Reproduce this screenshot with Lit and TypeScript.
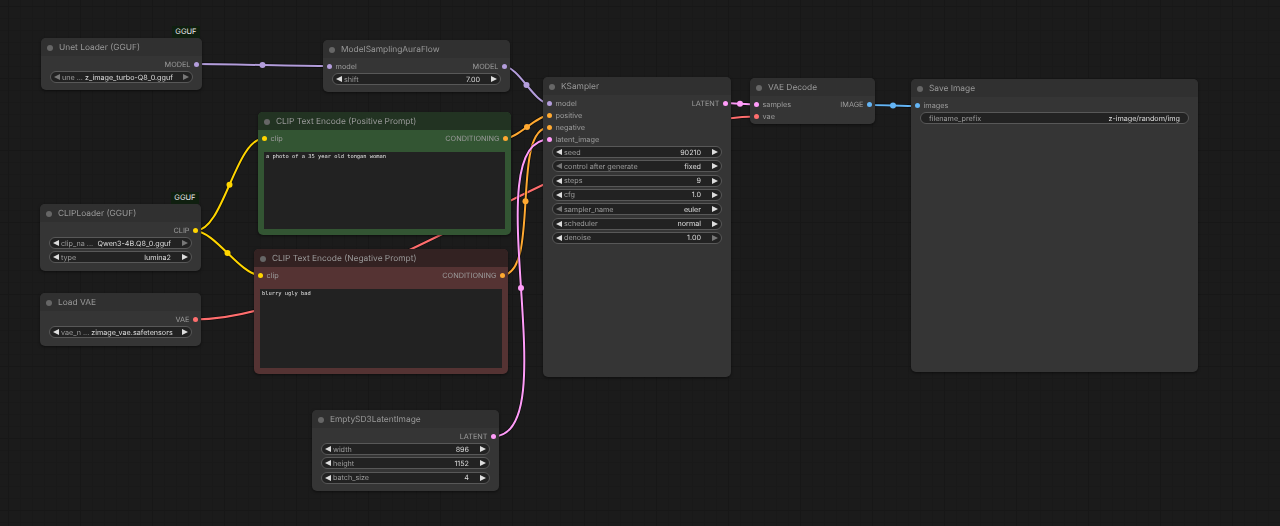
import {LitElement, html, css, svg} from 'lit';
import {customElement, property} from 'lit/decorators.js';

type Slot = {name: string; color: string};
type Widget = {label: string; value: string; dimL?: boolean; dimR?: boolean; noArrows?: boolean};
type NodeData = {
    title: string;
    x: number;
    y: number;
    w: number;
    h: number;
    tone?: 'green' | 'red';
    badge?: string;
    inputs?: Slot[];
    outputs?: Slot[];
    widgets?: Widget[];
    text?: string;
};

const MODEL = '#b39ddb';
const CLIP = '#ffd500';
const VAE = '#ff6e6e';
const COND = '#ffa931';
const LATENT = '#ff9cf9';
const IMAGE = '#64b5f6';

const NODES: NodeData[] = [
    {
        title: 'Unet Loader (GGUF)', x: 41, y: 38, w: 161, h: 52, badge: 'GGUF',
        outputs: [{name: 'MODEL', color: MODEL}],
        widgets: [{label: 'une ...', value: 'z_image_turbo-Q8_0.gguf', dimL: true, dimR: true}],
    },
    {
        title: 'ModelSamplingAuraFlow', x: 323, y: 40, w: 187, h: 52,
        inputs: [{name: 'model', color: MODEL}],
        outputs: [{name: 'MODEL', color: MODEL}],
        widgets: [{label: 'shift', value: '7.00'}],
    },
    {
        title: 'CLIP Text Encode (Positive Prompt)', x: 258, y: 112, w: 253, h: 123, tone: 'green',
        inputs: [{name: 'clip', color: CLIP}],
        outputs: [{name: 'CONDITIONING', color: COND}],
        text: 'a photo of a 35 year old tongan woman',
    },
    {
        title: 'CLIPLoader (GGUF)', x: 40, y: 204, w: 161, h: 67, badge: 'GGUF',
        outputs: [{name: 'CLIP', color: CLIP}],
        widgets: [
            {label: 'clip_na ...', value: 'Qwen3-4B.Q8_0.gguf', dimR: true},
            {label: 'type', value: 'lumina2'},
        ],
    },
    {
        title: 'Load VAE', x: 40, y: 293, w: 161, h: 53,
        outputs: [{name: 'VAE', color: VAE}],
        widgets: [{label: 'vae_n ...', value: 'zimage_vae.safetensors'}],
    },
    {
        title: 'CLIP Text Encode (Negative Prompt)', x: 254, y: 249, w: 254, h: 125, tone: 'red',
        inputs: [{name: 'clip', color: CLIP}],
        outputs: [{name: 'CONDITIONING', color: COND}],
        text: 'blurry ugly bad',
    },
    {
        title: 'EmptySD3LatentImage', x: 312, y: 410, w: 187, h: 81,
        outputs: [{name: 'LATENT', color: LATENT}],
        widgets: [
            {label: 'width', value: '896'},
            {label: 'height', value: '1152'},
            {label: 'batch_size', value: '4'},
        ],
    },
    {
        title: 'KSampler', x: 543, y: 77, w: 188, h: 300,
        inputs: [
            {name: 'model', color: MODEL},
            {name: 'positive', color: COND},
            {name: 'negative', color: COND},
            {name: 'latent_image', color: LATENT},
        ],
        outputs: [{name: 'LATENT', color: LATENT}],
        widgets: [
            {label: 'seed', value: '90210'},
            {label: 'control after generate', value: 'fixed', dimL: true},
            {label: 'steps', value: '9'},
            {label: 'cfg', value: '1.0'},
            {label: 'sampler_name', value: 'euler', dimL: true},
            {label: 'scheduler', value: 'normal'},
            {label: 'denoise', value: '1.00', dimR: true},
        ],
    },
    {
        title: 'VAE Decode', x: 750, y: 78, w: 125, h: 46,
        inputs: [{name: 'samples', color: LATENT}, {name: 'vae', color: VAE}],
        outputs: [{name: 'IMAGE', color: IMAGE}],
    },
    {
        title: 'Save Image', x: 911, y: 79, w: 287, h: 293,
        inputs: [{name: 'images', color: IMAGE}],
        widgets: [{label: 'filename_prefix', value: 'z-image/random/img', noArrows: true}],
    },
];

// from slot, to slot, colour
const WIRES: [number, number, number, number, string][] = [
    [195, 319.5, 755, 116.5, VAE],
    [196, 64, 329, 66, MODEL],
    [504, 66.5, 549, 103.5, MODEL],
    [195, 231, 264, 138.5, CLIP],
    [195, 231, 260, 275, CLIP],
    [505, 138.5, 549, 115.5, COND],
    [502, 275, 549, 127.5, COND],
    [493, 436.5, 549, 139.5, LATENT],
    [725, 103, 755, 104.5, LATENT],
    [869, 105, 917, 106, IMAGE],
];

@customElement('graph-node')
export class GraphNode extends LitElement {
    @property({attribute: false}) data!: NodeData;

    static styles = css`
        :host {
            display: block;
            position: absolute;
        }

        .node {
            position: relative;
            display: flex;
            flex-direction: column;
            height: 100%;
            border-radius: 5px;
            background: #353535;
            box-shadow: 0 1px 3px rgba(0, 0, 0, 0.5);
            font: 7.2px Inter, "Liberation Sans", sans-serif;
            text-rendering: geometricPrecision;
            color: #9c9c9c;
            filter: blur(0.3px);
        }

        .node.green {
            background: #335533;
        }

        .node.red {
            background: #553333;
        }

        .badge {
            position: absolute;
            right: 2.5px;
            top: -12px;
            height: 12px;
            padding: 0 3px;
            background: #0f1f0f;
            color: #eee;
            font-size: 7.5px;
            line-height: 12px;
        }

        .title {
            flex: none;
            display: flex;
            align-items: center;
            gap: 6px;
            height: 18px;
            box-sizing: border-box;
            padding: 1px 0 0 6px;
            border-radius: 5px 5px 0 0;
            background: #303030;
            font-size: 8.4px;
            color: #999;
        }

        .green .title {
            background: #223322;
        }

        .red .title {
            background: #332222;
        }

        .dot {
            width: 6px;
            height: 6px;
            border-radius: 50%;
            background: #666;
        }

        .slots {
            flex: none;
            display: flex;
            justify-content: space-between;
            padding-top: 2.5px;
            font-size: 7.3px;
        }

        .col {
            display: flex;
            flex-direction: column;
        }

        .slot {
            display: flex;
            align-items: center;
            gap: 4px;
            height: 12px;
            padding: 0 3.5px;
        }

        .col.out .slot {
            flex-direction: row-reverse;
            gap: 3px;
        }

        .pin {
            width: 5px;
            height: 5px;
            border-radius: 50%;
        }

        .widgets {
            display: flex;
            flex-direction: column;
            gap: 2.33px;
            margin: 0.5px 9px 0;
        }

        .widget {
            display: flex;
            align-items: center;
            height: 12px;
            box-sizing: border-box;
            padding: 0 3px;
            gap: 2px;
            border: 1px solid #585858;
            border-radius: 6px;
            background: #222;
            white-space: nowrap;
        }

        .widget.plain {
            padding: 0 8px;
        }

        .widget svg {
            flex: none;
            width: 6px;
            height: 6px;
            fill: #ddd;
        }

        .widget svg.dim {
            fill: #777;
        }

        .label {
            flex: none;
        }

        .value {
            flex: 1;
            min-width: 0;
            padding-right: 9px;
            text-align: right;
            color: #ddd;
        }

        .plain .value {
            padding-right: 0;
        }

        .textarea {
            flex: 1;
            margin: 7px 6px 6px;
            padding: 2px 2px;
            background: #222;
            color: #e4e4e4;
            font: 5.4px/7px "DejaVu Sans Mono", monospace;
        }
    `;

    private arrow(left: boolean, dim?: boolean) {
        return html`<svg class=${dim ? 'dim' : ''} viewBox="0 0 6 6">
            <path d=${left ? 'M0 3 6 0V6Z' : 'M6 3 0 0V6Z'}></path>
        </svg>`;
    }

    private slot(s: Slot) {
        return html`<div class="slot"><span class="pin" style="background:${s.color}"></span>${s.name}</div>`;
    }

    render() {
        const d = this.data;
        return html`
            <div class="node ${d.tone ?? ''}">
                ${d.badge ? html`<div class="badge">${d.badge}</div>` : ''}
                <div class="title"><span class="dot"></span>${d.title}</div>
                <div class="slots">
                    <div class="col">${(d.inputs ?? []).map((s) => this.slot(s))}</div>
                    <div class="col out">${(d.outputs ?? []).map((s) => this.slot(s))}</div>
                </div>
                ${d.widgets
                    ? html`<div class="widgets">
                          ${d.widgets.map(
                              (w) => html`<div class="widget ${w.noArrows ? 'plain' : ''}">
                                  ${w.noArrows ? '' : this.arrow(true, w.dimL)}
                                  <span class="label">${w.label}</span>
                                  <span class="value">${w.value}</span>
                                  ${w.noArrows ? '' : this.arrow(false, w.dimR)}
                              </div>`
                          )}
                      </div>`
                    : ''}
                ${d.text ? html`<div class="textarea">${d.text}</div>` : ''}
            </div>
        `;
    }
}

@customElement('app-root')
export class AppRoot extends LitElement {
    static styles = css`
        :host {
            display: block;
            position: relative;
            width: 1280px;
            height: 526px;
            overflow: hidden;
            background-color: #1b1b1b;
            background-image:
                linear-gradient(to right, #171717 1px, transparent 1px),
                linear-gradient(to bottom, #171717 1px, transparent 1px),
                linear-gradient(to right, #191919 1px, transparent 1px),
                linear-gradient(to bottom, #191919 1px, transparent 1px);
            background-size: 72px 72px, 72px 72px, 12px 12px, 12px 12px;
            background-position: 8px 6px;
        }

        svg {
            position: absolute;
            inset: 0;
            width: 100%;
            height: 100%;
            filter: blur(0.25px);
        }

        .under {
            fill: none;
            stroke: #000;
            stroke-opacity: 0.55;
            stroke-width: 3.5;
        }

        .wire {
            fill: none;
            stroke-width: 2;
        }
    `;

    // same spline as the editor: handles a quarter of the distance long
    private wire([x1, y1, x2, y2, color]: [number, number, number, number, string]) {
        const dist = Math.hypot(x2 - x1, y2 - y1);
        const c1 = x1 + dist * 0.25;
        const c2 = x2 - dist * 0.25;
        const d = `M${x1} ${y1}C${c1} ${y1} ${c2} ${y2} ${x2} ${y2}`;
        const mx = (x1 + 3 * c1 + 3 * c2 + x2) / 8;
        const my = (y1 + y2) / 2;
        return svg`
            <path class="under" d=${d}></path>
            <path class="wire" d=${d} stroke=${color}></path>
            <circle cx=${mx} cy=${my} r="3" fill=${color}></circle>
        `;
    }

    render() {
        return html`
            <svg viewBox="0 0 1280 526">${WIRES.map((w) => this.wire(w))}</svg>
            ${NODES.map(
                (n) => html`<graph-node
                    .data=${n}
                    style="left:${n.x}px;top:${n.y}px;width:${n.w}px;height:${n.h}px"
                ></graph-node>`
            )}
        `;
    }
}
